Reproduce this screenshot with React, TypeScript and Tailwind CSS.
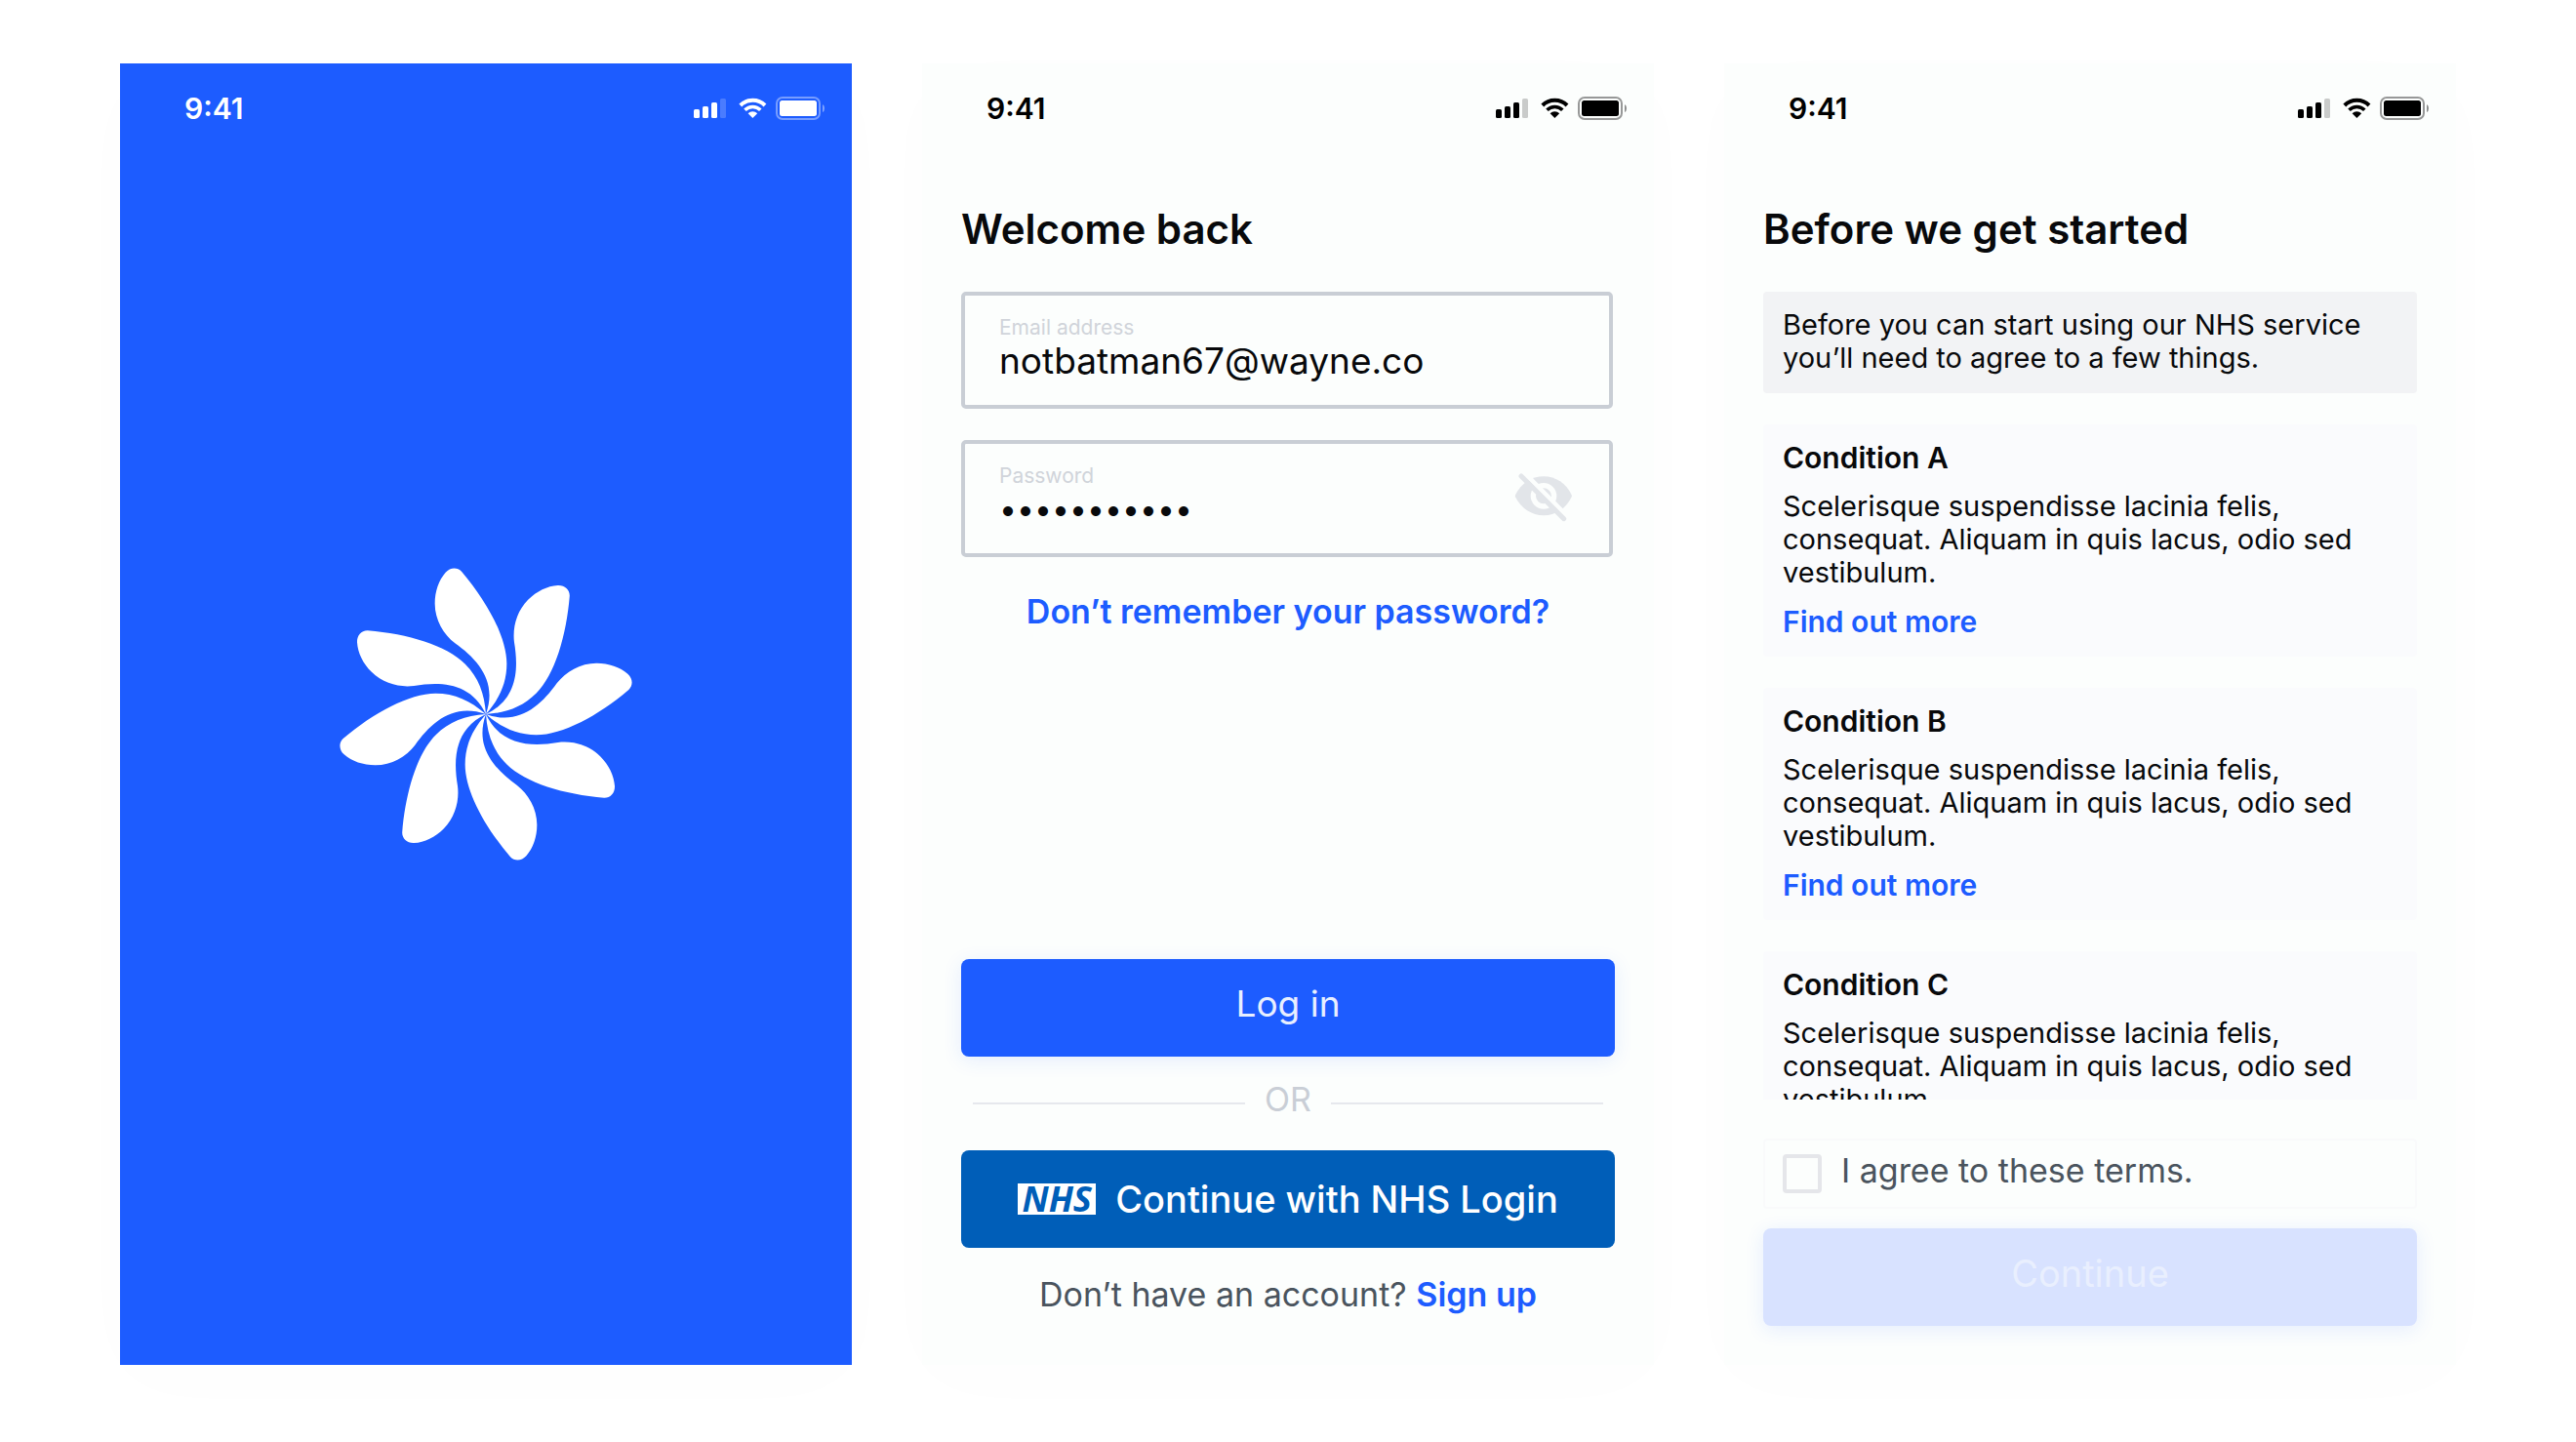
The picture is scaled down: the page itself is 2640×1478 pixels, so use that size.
import type { ReactNode } from "react";

const PETAL =
  "M0 0 C42 -48 64 -96 64 -155 C64 -235 5 -345 -75 -439 C-88 -453 -110 -452 -124 -436 C-145 -412 -157 -378 -157 -340 C-157 -290 -130 -245 -95 -218 C-25 -168 36 -100 0 0Z";
const PETAL_ANGLES = [0, 45, 90, 135, 180, 225, 270, 315];

const CONDITIONS = ["Condition A", "Condition B", "Condition C"];

function FlowerLogo() {
  return (
    <svg viewBox="-453 -453 906 906" className="h-[302px] w-[302px] fill-white" role="img" aria-label="Flower logo">
      {PETAL_ANGLES.map((angle) => (
        <path key={angle} d={PETAL} transform={`rotate(${angle})`} />
      ))}
    </svg>
  );
}

function StatusIcons() {
  return (
    <svg viewBox="0 0 134 24" className="h-6 w-[134px]" fill="currentColor" aria-hidden="true">
      <rect x="0" y="13" width="6" height="9" rx="1.5" />
      <rect x="9" y="10" width="6" height="12" rx="1.5" />
      <rect x="18" y="6" width="6" height="16" rx="1.5" />
      <rect x="27" y="2" width="6" height="20" rx="1.5" opacity="0.2" />
      <g fill="none" stroke="currentColor">
        <path d="M47.8 9 A17.8 17.8 0 0 1 73 9" strokeWidth="4" />
        <path d="M52.5 13.7 A11.2 11.2 0 0 1 68.3 13.7" strokeWidth="3.6" />
      </g>
      <path d="M60.4 22 L55.6 17.2 A6.7 6.7 0 0 1 65.2 17.2Z" />
      <rect x="85" y="1" width="44" height="22" rx="6" fill="none" stroke="currentColor" strokeWidth="2" opacity="0.4" />
      <rect x="88" y="4" width="38" height="16" rx="2.5" />
      <path d="M132 8 Q134 9 134 12 Q134 15 132 16Z" opacity="0.45" />
    </svg>
  );
}

function StatusBar() {
  return (
    <div className="flex h-[92px] shrink-0 items-center justify-between pr-7 pl-[66px]">
      <span className="text-[30px] leading-9 font-semibold">9:41</span>
      <StatusIcons />
    </div>
  );
}

function HiddenEyeIcon() {
  return (
    <svg viewBox="90 45 186 156" className="h-[52px] w-[62px]" aria-hidden="true">
      <path
        className="fill-[#e2e5e9]"
        d="M96 121 Q95 118 96 115 C114 80 146 58 183 58 S252 80 269 115 Q270 118 269 121 C252 156 220 178 183 178 S114 156 96 121Z"
      />
      <circle cx="183" cy="118" r="32" className="fill-none stroke-[#fcfefd]" strokeWidth="16" />
      <path d="M108 31 L272 197" className="stroke-[#fcfefd]" strokeWidth="14" />
      <path d="M114 57 L245 188" className="stroke-[#e2e5e9]" strokeWidth="15" strokeLinecap="round" />
    </svg>
  );
}

function Screen({ title, children }: { title: string; children: ReactNode }) {
  return (
    <section className="flex min-h-0 min-w-0 flex-col bg-[#fcfefd] text-black shadow-[0_16px_80px_rgba(0,0,0,0.01)]">
      <StatusBar />
      <div className="flex min-h-0 flex-1 flex-col px-10 pt-[52px] pb-10 text-[#08090b]">
        <h1 className="mb-[38px] text-[42px] leading-[52px] font-semibold">{title}</h1>
        {children}
      </div>
    </section>
  );
}

function Field(props: {
  id: string;
  label: string;
  type: string;
  value: string;
  inputClass: string;
  action?: ReactNode;
}) {
  return (
    <div className="mr-0.5 flex items-center rounded-[5px] border-4 border-[#c9ced5] pt-[21px] pr-9 pb-[23px] pl-[35px]">
      <div className="flex min-w-0 flex-1 flex-col">
        <label htmlFor={props.id} className="text-[21px] leading-6 text-[#d0d4da]">
          {props.label}
        </label>
        <input
          id={props.id}
          type={props.type}
          defaultValue={props.value}
          className={`h-11 w-full bg-transparent outline-none ${props.inputClass}`}
        />
      </div>
      {props.action}
    </div>
  );
}

function SplashScreen() {
  return (
    <section className="flex min-w-0 flex-col bg-[#1d5cff] text-white shadow-[0_16px_80px_rgba(0,0,0,0.01)]">
      <StatusBar />
      <div className="flex flex-1 items-center justify-center pb-[92px]">
        <FlowerLogo />
      </div>
    </section>
  );
}

function LoginScreen() {
  return (
    <Screen title="Welcome back">
      <form className="flex flex-1 flex-col">
        <div className="flex flex-col gap-8">
          <Field
            id="email"
            label="Email address"
            type="email"
            value="notbatman67@wayne.co"
            inputClass="text-[37px] leading-[44px]"
          />
          <Field
            id="password"
            label="Password"
            type="password"
            value="bruce-wayne"
            inputClass="text-[32px] leading-[44px]"
            action={
              <button type="button" aria-label="Show password">
                <HiddenEyeIcon />
              </button>
            }
          />
        </div>
        <a href="#reset" className="mt-9 self-center text-[34px] leading-10 font-semibold text-[#1d5cff]">
          Don’t remember your password?
        </a>
        <button
          type="submit"
          className="mt-auto h-[100px] rounded-lg bg-[#1d5cff] pb-2 text-[37px] text-[#e8efff] shadow-[0_4px_20px_rgba(29,92,255,0.1)]"
        >
          Log in
        </button>
        <div className="flex h-24 items-center gap-5 px-3">
          <div className="h-0.5 flex-1 bg-[#e6e8ed]" />
          <span className="pb-2 text-[34px] leading-10 text-[#c9ced6]">OR</span>
          <div className="h-0.5 flex-1 bg-[#e6e8ed]" />
        </div>
        <button
          type="button"
          className="flex h-[100px] items-center justify-center gap-5 rounded-lg bg-[#005eb8] text-[38px] font-medium text-white"
        >
          <span className="flex w-20 items-center justify-center bg-white font-['Open_Sans',sans-serif] text-[36px] leading-8 font-bold text-[#005eb8] italic">
            NHS
          </span>
          Continue with NHS Login
        </button>
        <p className="mt-7 mb-3 text-center text-[34px] leading-10 text-[#4a545e]">
          Don’t have an account?{" "}
          <a href="#signup" className="font-semibold text-[#1d5cff]">
            Sign up
          </a>
        </p>
      </form>
    </Screen>
  );
}

function TermsScreen() {
  return (
    <Screen title="Before we get started">
      <p className="rounded bg-[#f2f3f5] px-5 pt-[17px] pb-[19px] text-[29px] leading-[34px]">
        Before you can start using our NHS service you’ll need to agree to a few things.
      </p>
      <div className="mt-8 flex min-h-0 flex-1 flex-col gap-8 overflow-x-hidden overflow-y-auto [scrollbar-width:none]">
        {CONDITIONS.map((name) => (
          <article
            key={name}
            className="flex shrink-0 flex-col gap-4 rounded bg-[#fafbfd] px-5 pt-[17px] pb-[19px] text-[29px] leading-[34px]"
          >
            <h2 className="text-[30px] font-semibold">{name}</h2>
            <p>Scelerisque suspendisse lacinia felis, consequat. Aliquam in quis lacus, odio sed vestibulum.</p>
            <a href="#more" className="self-start text-[30px] font-semibold text-[#1d5cff]">
              Find out more
            </a>
          </article>
        ))}
      </div>
      <label className="mt-10 flex items-center gap-5 rounded border-2 border-[#f9fafb] px-[18px] py-3.5 text-[34px] leading-10 text-[#4a545e]">
        <input
          type="checkbox"
          className="h-10 w-10 shrink-0 appearance-none rounded border-4 border-[#e5e6ea] checked:bg-[#1d5cff]"
        />
        <span className="-mt-1.5">I agree to these terms.</span>
      </label>
      <button
        type="button"
        disabled
        className="mt-5 h-[100px] shrink-0 rounded-lg bg-[#d8e2ff] pb-2 text-[38px] text-[#e9effe] shadow-[0_4px_20px_rgba(29,92,255,0.1)]"
      >
        Continue
      </button>
    </Screen>
  );
}

export default function App() {
  return (
    <main className="grid h-screen grid-cols-3 grid-rows-1 gap-[72px] bg-white px-[123px] pt-[65px] pb-[79px] font-['Inter',sans-serif]">
      <SplashScreen />
      <LoginScreen />
      <TermsScreen />
    </main>
  );
}
